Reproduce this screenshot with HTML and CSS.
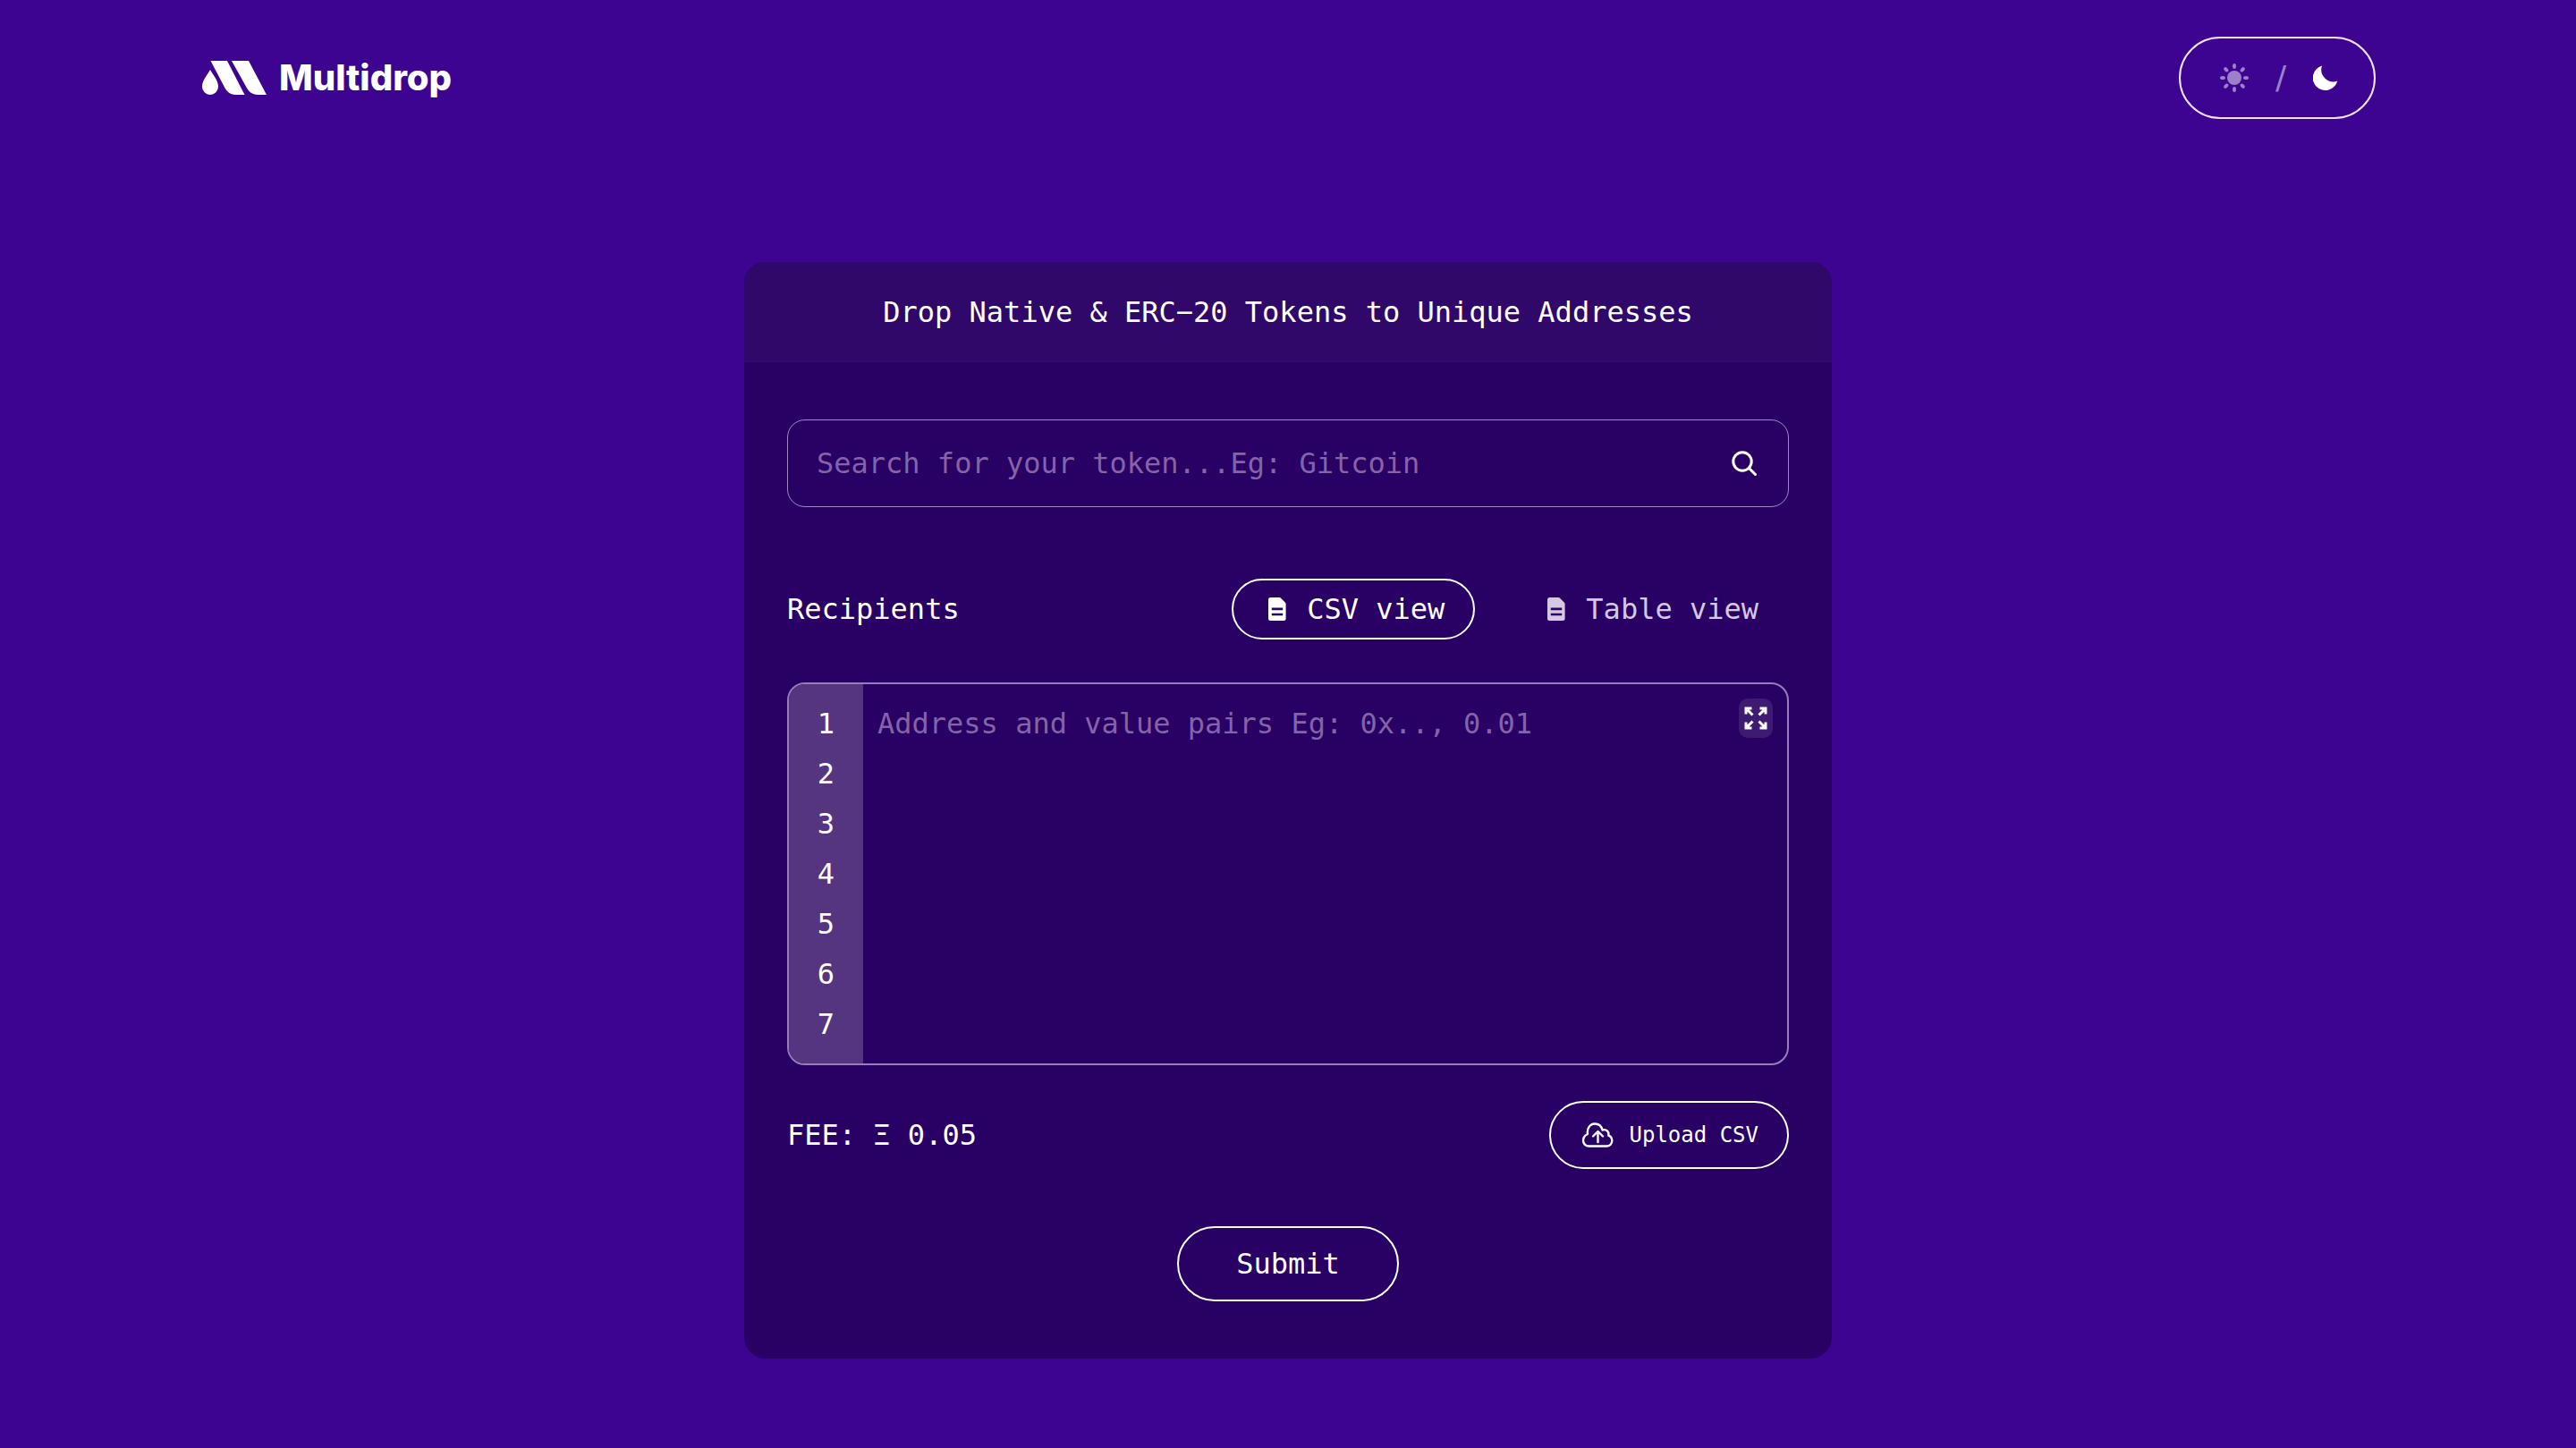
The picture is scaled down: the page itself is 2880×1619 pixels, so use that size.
FILE: index.html
```html
<!DOCTYPE html>
<html lang="en">
<head>
<meta charset="utf-8">
<meta name="viewport" content="width=device-width, initial-scale=1">
<title>Multidrop</title>
<link rel="stylesheet" href="styles.css">
</head>
<body>
<header class="topbar">
  <a class="brand" href="#">
    <svg class="brand-mark" viewBox="0 0 72 38" aria-hidden="true">
      <path d="M9 10C13 17 18 22 18 29A9 9 0 0 1 0 29C0 22 5 17 9 10Z"/>
      <path d="M9.500 0H28L47.500 38H38Q29.500 38 25.500 30.500Z"/>
      <path d="M33 0H52L72 38H62.500Q54 38 50 30.500Z"/>
    </svg>
    <span class="brand-name">Multidrop</span>
  </a>
  <button class="theme-toggle" type="button" aria-label="Switch theme">
    <svg class="sun" viewBox="0 0 32 32" aria-hidden="true">
      <circle cx="16" cy="16" r="8"/>
      <g>
        <ellipse cx="16" cy="3" rx="2" ry="3"/><ellipse cx="16" cy="29" rx="2" ry="3"/>
        <ellipse cx="3" cy="16" rx="3" ry="2"/><ellipse cx="29" cy="16" rx="3" ry="2"/>
      </g>
      <g transform="rotate(45 16 16)">
        <ellipse cx="16" cy="3" rx="2" ry="3"/><ellipse cx="16" cy="29" rx="2" ry="3"/>
        <ellipse cx="3" cy="16" rx="3" ry="2"/><ellipse cx="29" cy="16" rx="3" ry="2"/>
      </g>
    </svg>
    <span class="slash">/</span>
    <svg class="moon" viewBox="0 0 28 28" aria-hidden="true">
      <path d="M10 0.500A14 14 0 1 0 27.300 17.500A13.500 13.500 0 0 1 10 0.500Z"/>
    </svg>
  </button>
</header>

<main class="card">
  <h1 class="card-title">Drop Native &amp; ERC−20 Tokens to Unique Addresses</h1>
  <form class="card-body">
    <div class="search">
      <input class="search-input" type="text" aria-label="Search for your token" placeholder="Search for your token...Eg: Gitcoin">
      <button class="search-button" type="button" aria-label="Search">
        <svg class="search-icon" viewBox="0 0 28 28" aria-hidden="true">
          <circle cx="12" cy="12" r="10.200"/><path d="M19.500 19.500L26.500 26.500"/>
        </svg>
      </button>
    </div>

    <div class="row recipients">
      <label class="label" for="pairs">Recipients</label>
      <div class="views">
        <button class="view view-active" type="button">
          <svg class="file-icon" viewBox="0 0 32 32" aria-hidden="true">
            <path fill-rule="evenodd" d="M9.500 3H19.500Q20.300 3 21 3.700L26 8.700Q26.600 9.300 26.600 10.200V26.500Q26.600 29 24 29H9.500Q7 29 7 26.500V5.500Q7 3 9.500 3ZM10.800 14.600V17.200H23.200V14.600ZM10.800 20.700V23.300H23.200V20.700Z"/>
          </svg>CSV view</button>
        <button class="view" type="button">
          <svg class="file-icon" viewBox="0 0 32 32" aria-hidden="true">
            <path fill-rule="evenodd" d="M9.500 3H19.500Q20.300 3 21 3.700L26 8.700Q26.600 9.300 26.600 10.200V26.500Q26.600 29 24 29H9.500Q7 29 7 26.500V5.500Q7 3 9.500 3ZM10.800 14.600V17.200H23.200V14.600ZM10.800 20.700V23.300H23.200V20.700Z"/>
          </svg>Table view</button>
      </div>
    </div>

    <div class="editor">
      <ol class="gutter">
        <li>1</li><li>2</li><li>3</li><li>4</li><li>5</li><li>6</li><li>7</li>
      </ol>
      <textarea class="pairs" id="pairs" rows="7" placeholder="Address and value pairs Eg: 0x.., 0.01"></textarea>
      <button class="expand" type="button" aria-label="Expand editor">
        <svg class="expand-icon" viewBox="0 0 26 26" aria-hidden="true">
          <path d="M2 8.500V2H8.500M2 2L9.500 9.500M17.500 2H24V8.500M24 2L16.500 9.500M2 17.500V24H8.500M2 24L9.500 16.500M17.500 24H24V17.500M24 24L16.500 16.500"/>
        </svg>
      </button>
    </div>

    <div class="row summary">
      <p class="label">FEE: Ξ 0.05</p>
      <button class="upload" type="button">
        <svg class="cloud-icon" viewBox="0 0 40 40" stroke-width="2.400" aria-hidden="true">
          <path d="M10.500 32.500C6.500 32.500 4 29.500 4 26C4 22.500 6 20.300 9 19C8 12 12 7.500 17 7.500C21 7.500 24.500 10 25.500 14.500C30 13 33 16.500 32.300 20.500C35 21.500 36.300 24 36.300 26.200C36.300 30 33.500 32.500 30 32.500Z"/>
          <path d="M20.500 28V16.500M15 21.500L20.500 16L26 21.500"/>
        </svg>Upload CSV</button>
    </div>

    <button class="submit" type="submit">Submit</button>
  </form>
</main>
</body>
</html>
```
FILE: styles.css
```css
* {
  box-sizing: border-box;
}

body {
  margin: 0;
  min-height: 100vh;
  background: #3c0491;
  color: #fff;
  font-family: "DejaVu Sans Mono", Menlo, monospace;
  font-size: 32px;
  line-height: 56px;
}

button,
input,
textarea {
  margin: 0;
  padding: 0;
  border: 0;
  background: none;
  color: inherit;
  font: inherit;
}

button {
  cursor: pointer;
}

svg {
  display: block;
  flex: none;
}

.topbar {
  display: flex;
  align-items: center;
  justify-content: space-between;
  padding: 41px 224px 0;
}

.brand {
  display: flex;
  align-items: center;
  gap: 14px;
  padding-left: 2px;
  color: #fff;
  text-decoration: none;
}

.brand-mark {
  width: 72px;
  height: 38px;
  fill: #fff;
}

.brand-name {
  font-family: Inter, "Liberation Sans", sans-serif;
  font-size: 40px;
  font-weight: 800;
  line-height: 48px;
}

.theme-toggle {
  display: flex;
  align-items: center;
  justify-content: space-between;
  width: 220px;
  height: 92px;
  padding: 0 40px 0 44px;
  border: 2px solid #f0e2fc;
  border-radius: 46px;
}

.sun {
  width: 32px;
  height: 32px;
  fill: #9d80c9;
}

.slash {
  color: #9d80c9;
  font-family: "DejaVu Sans", sans-serif;
  font-size: 36px;
}

.moon {
  width: 28px;
  height: 28px;
  fill: #fff;
}

.card {
  max-width: 1216px;
  margin: 160px auto 100px;
  border-radius: 24px;
  overflow: hidden;
  background: #290064;
}

.card-title {
  margin: 0;
  padding: 28px 48px 27px;
  border-bottom: 1px solid #310c6c;
  background: #2f0869;
  font-size: 32px;
  font-weight: 400;
  text-align: center;
}

.card-body {
  display: flex;
  flex-direction: column;
  padding: 64px 48px;
}

.search {
  display: flex;
  align-items: center;
  height: 98px;
  padding: 0 35px 0 32px;
  border: 1px solid #a287c6;
  border-radius: 20px;
}

.search-input {
  flex: 1;
  min-width: 0;
  outline: none;
}

.search-input::placeholder,
.pairs::placeholder {
  color: #8463a8;
  opacity: 1;
}

.search-icon {
  width: 28px;
  height: 28px;
  fill: none;
  stroke: #fff;
  stroke-width: 3px;
  stroke-linecap: round;
}

.row {
  display: flex;
  align-items: center;
  justify-content: space-between;
}

.label {
  margin: 0;
}

.recipients {
  margin-top: 80px;
}

.views {
  display: flex;
  gap: 40px;
}

.view {
  display: flex;
  align-items: center;
  gap: 18px;
  height: 68px;
  padding: 0 32px;
  border: 2px solid transparent;
  border-radius: 34px;
  color: #d4c8e2;
}

.view-active {
  border-color: #fff;
  color: #fff;
}

.file-icon {
  width: 32px;
  height: 32px;
  fill: currentColor;
}

.editor {
  position: relative;
  display: flex;
  margin-top: 48px;
  border: 2px solid #987cbc;
  border-radius: 20px;
  overflow: hidden;
}

.gutter {
  flex: none;
  width: 83px;
  margin: 0;
  padding: 16px 0;
  background: #553580;
  list-style: none;
  text-align: center;
}

.pairs {
  display: block;
  flex: 1;
  min-width: 0;
  padding: 16px;
  outline: none;
  overflow: hidden;
  resize: none;
}

.expand {
  position: absolute;
  top: 16px;
  right: 16px;
  display: flex;
  align-items: center;
  justify-content: center;
  width: 38px;
  height: 44px;
  border-radius: 10px;
  background: #3e1b73;
}

.expand-icon {
  width: 26px;
  height: 26px;
  fill: none;
  stroke: #fff;
  stroke-width: 3px;
}

.summary {
  margin-top: 40px;
}

.upload {
  display: flex;
  align-items: center;
  gap: 16px;
  height: 76px;
  padding: 0 32px;
  border: 2px solid #fff;
  border-radius: 38px;
  font-size: 24px;
}

.cloud-icon {
  width: 40px;
  height: 40px;
  fill: none;
  stroke: #fff;
  stroke-linecap: round;
  stroke-linejoin: round;
}

.submit {
  align-self: center;
  height: 84px;
  margin-top: 64px;
  padding: 0 64px;
  border: 2px solid #fff;
  border-radius: 42px;
}
```
